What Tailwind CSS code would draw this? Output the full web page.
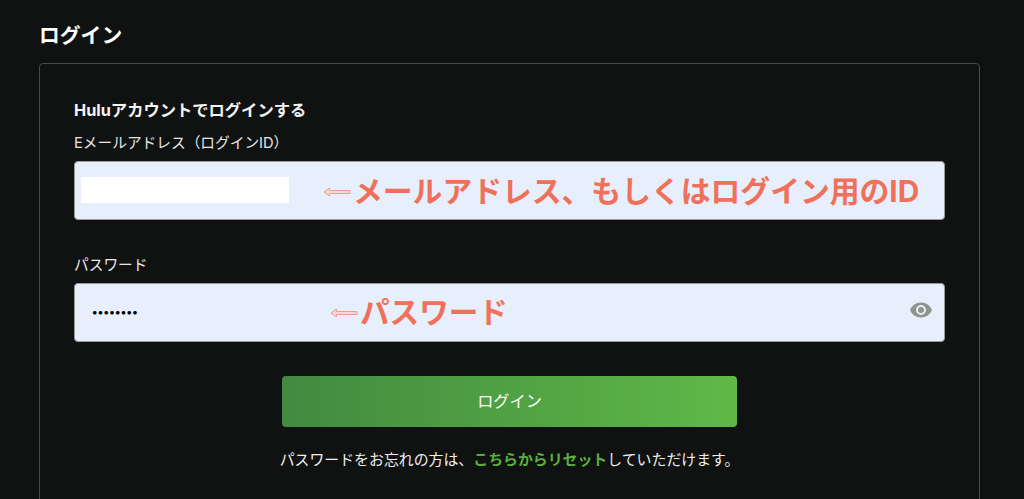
<!DOCTYPE html>
<html lang="ja">
<head>
<meta charset="utf-8">
<script src="https://cdn.jsdelivr.net/npm/@tailwindcss/browser@4"></script>
<title>ログイン</title>
</head>
<body class="bg-[#101212] overflow-hidden">
<div class="h-[499px] w-[1024px] overflow-hidden px-[39px] pt-[21px] text-white font-['Inter','Noto_Sans_CJK_JP',sans-serif]">
  <h1 class="text-[20.800px] leading-[30px] font-bold">ログイン</h1>
  <section class="mt-[12px] h-[460px] w-[941px] rounded-t-[4px] border border-[#4a4c4c] px-[34px] pt-[34px]">
    <h2 class="text-[16.300px] leading-[24px] font-bold text-[#f4f4f4]">Huluアカウントでログインする</h2>
    <label class="mt-[11px] block text-[14.700px] leading-[20px] text-[#e6e6e6]">Eメールアドレス（ログインID）</label>
    <div class="relative mt-[8px] h-[59px] w-[871px] rounded-[4px] border border-[#9a9c9c] bg-[#e7effc]">
      <div class="absolute left-[6px] top-[15px] h-[26px] w-[208px] bg-white"></div>
      <div class="absolute left-[248px] top-[1px] flex h-full items-center gap-[2px]">
        <svg class="h-[10px] w-[28px]" viewBox="0 0 28 10"><path d="M1 5 6.500 1v2.500H27v3H6.500V9Z" fill="#f8d8d4" stroke="#ee9c90" stroke-width="1"/></svg>
        <span class="text-[29.800px] leading-none font-bold text-[#f0705a]">メールアドレス、もしくはログイン用のID</span>
      </div>
    </div>
    <label class="mt-[35px] block text-[14.700px] leading-[20px] text-[#e6e6e6]">パスワード</label>
    <div class="relative mt-[8px] flex h-[59px] w-[871px] items-center rounded-[4px] border border-[#9a9c9c] bg-[#e7effc] pl-[17px]">
      <span class="text-[11.500px] leading-none font-bold tracking-[0.300px] text-black">••••••••</span>
      <div class="absolute left-[255px] top-0 flex h-full items-center gap-[2px]">
        <svg class="h-[10px] w-[28px]" viewBox="0 0 28 10"><path d="M1 5 6.500 1v2.500H27v3H6.500V9Z" fill="#f8d8d4" stroke="#ee9c90" stroke-width="1"/></svg>
        <span class="text-[29.600px] leading-none font-bold text-[#f0705a]">パスワード</span>
      </div>
      <svg class="absolute right-[11px] top-[14px] h-[24px] w-[24px]" viewBox="0 0 24 24" fill="#8e9489"><path fill-rule="evenodd" d="M12 4.500C7 4.500 2.730 7.610 1 12c1.730 4.390 6 7.500 11 7.500s9.270-3.110 11-7.500c-1.730-4.390-6-7.500-11-7.500ZM12 17a5 5 0 1 1 0-10 5 5 0 0 1 0 10Zm0-8a3 3 0 1 0 0 6 3 3 0 0 0 0-6Z"/></svg>
    </div>
    <button class="mt-[34px] ml-[208px] block h-[51px] w-[455px] rounded-[4px] bg-gradient-to-r from-[#428a40] to-[#5fb946] text-[16.200px] text-white">ログイン</button>
    <p class="mt-[21px] text-center text-[14.900px] leading-[24px] text-[#eeeeee]">パスワードをお忘れの方は、<a class="font-bold text-[#5ab03e]">こちらからリセット</a>していただけます。</p>
  </section>
</div>
</body>
</html>
